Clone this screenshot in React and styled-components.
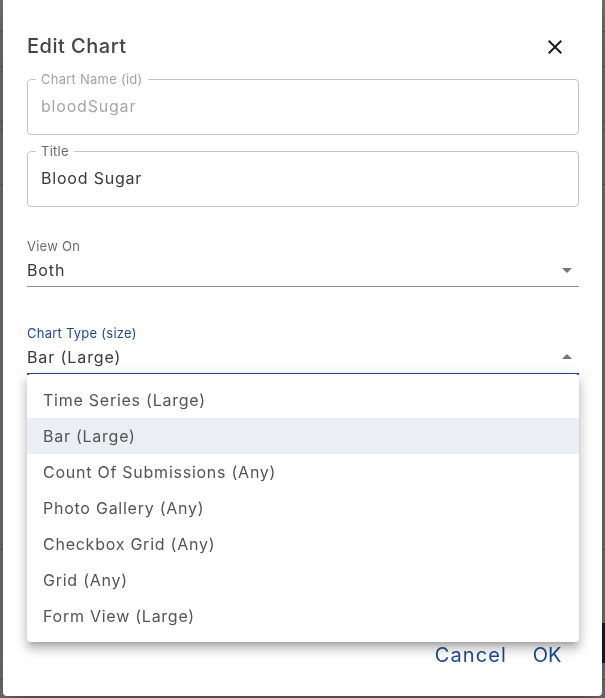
import React from "react";
import styled, { createGlobalStyle } from "styled-components";

const GlobalStyle = createGlobalStyle`
  html, body { margin: 0; padding: 0; }
  body {
    width: 605px;
    height: 698px;
    overflow: hidden;
    background: #ffffff;
    font-family: Inter, "Open Sans", sans-serif;
  }
  * { box-sizing: border-box; }
`;

/* ---------- page behind the modal ---------- */
const BgPage = styled.div`
  display: flex;
  flex-direction: column;
  height: 698px;
  overflow: hidden;
`;

const BgRow = styled.div`
  flex-shrink: 0;
  height: ${(p) => p.$h}px;
  border-bottom: ${(p) => (p.$plain ? "none" : "1px solid #cfcfcf")};
  display: flex;
  justify-content: flex-end;
`;

const BgButton = styled.div`
  width: 24px;
  height: 100%;
  background: #1e3f7a;
  border-radius: 4px 0 0 4px;
`;

/* ---------- modal ---------- */
const Overlay = styled.div`
  position: fixed;
  inset: 0;
  background: rgba(0, 0, 0, 0.56);
  display: flex;
  justify-content: center;
  align-items: flex-end;
  padding-bottom: 2px;
`;

const Dialog = styled.div`
  width: 599px;
  height: 700px;
  flex-shrink: 0;
  background: #fff;
  border-radius: 4px;
  box-shadow: 0 11px 15px -7px rgba(0, 0, 0, 0.2),
    0 24px 38px 3px rgba(0, 0, 0, 0.14), 0 9px 46px 8px rgba(0, 0, 0, 0.12);
  display: flex;
  flex-direction: column;
  padding: 34px 23px 0 24px;
`;

const Header = styled.div`
  display: flex;
  align-items: center;
  justify-content: space-between;
  height: 32px;
`;

const Title = styled.h2`
  margin: 0;
  font-size: 20px;
  line-height: 32px;
  font-weight: 500;
  color: #454545;
  letter-spacing: 0.5px;
`;

const CloseButton = styled.button`
  width: 24px;
  height: 24px;
  padding: 0;
  margin: 2px 12px 0 0;
  border: none;
  background: none;
  display: flex;
  color: #1c1c1c;
  cursor: pointer;
`;

const Fieldset = styled.fieldset`
  margin: ${(p) => p.$mt}px 0 0 0;
  padding: 0 13px;
  border: 1px solid #c4c4c4;
  border-radius: 4px;
  min-width: 0;
`;

const Legend = styled.legend`
  margin-left: -5px;
  padding: 0 5px;
  font-size: 13px;
  line-height: 16px;
  letter-spacing: 0.25px;
  color: ${(p) => (p.$disabled ? "#a3a3a3" : "#6b6b6b")};
`;

const OutlinedValue = styled.div`
  padding: 7px 0 16px;
  font-size: 16px;
  line-height: 24px;
  color: ${(p) => (p.$disabled ? "#a6a6a6" : "#3a3a3a")};
  letter-spacing: 0.8px;
`;

const SelectField = styled.div`
  position: relative;
  margin-top: ${(p) => p.$mt}px;
  display: flex;
  flex-direction: column;
`;

const SelectLabel = styled.label`
  font-size: 13px;
  line-height: 16px;
  color: ${(p) => (p.$focused ? "#1f4a91" : "#6b6b6b")};
  letter-spacing: 0.25px;
`;

const SelectInput = styled.div`
  display: flex;
  align-items: center;
  justify-content: space-between;
  padding: 4px 0;
  border-bottom: ${(p) => (p.$focused ? "2px solid #1f4a91" : "1px solid #8e8e8e")};
`;

const SelectValue = styled.span`
  font-size: 16px;
  line-height: 24px;
  color: #3a3a3a;
  letter-spacing: 0.9px;
`;

const ArrowIcon = styled.svg`
  width: 24px;
  height: 24px;
  fill: #757575;
  flex-shrink: 0;
`;

const Menu = styled.ul`
  position: absolute;
  left: 0;
  right: 0;
  top: calc(100% - 1px);
  margin: 0;
  padding: 8px 0;
  list-style: none;
  background: #fff;
  border-radius: 4px;
  z-index: 5;
  box-shadow: 0 5px 5px -3px rgba(0, 0, 0, 0.2),
    0 8px 10px 1px rgba(0, 0, 0, 0.14), 0 3px 14px 2px rgba(0, 0, 0, 0.12);
`;

const MenuItem = styled.li`
  height: 36px;
  display: flex;
  align-items: center;
  padding: 0 16px;
  font-size: 16px;
  color: #545454;
  letter-spacing: 0.75px;
  background: ${(p) => (p.$selected ? "#ebeef3" : "transparent")};
`;

const Actions = styled.div`
  margin-top: auto;
  display: flex;
  justify-content: flex-end;
  align-items: center;
  padding-bottom: 23px;
`;

const TextButton = styled.button`
  min-width: 64px;
  height: 36px;
  padding: 0 8px;
  border: none;
  background: none;
  font-family: inherit;
  font-size: 20px;
  letter-spacing: ${(p) => p.$ls || 0}px;
  color: #1f4a91;
  cursor: pointer;
`;

const CloseIcon = () => (
  <svg width="24" height="24" viewBox="0 0 24 24" fill="currentColor">
    <path d="M19 6.41 17.59 5 12 10.59 6.41 5 5 6.41 10.59 12 5 17.59 6.41 19 12 13.41 17.59 19 19 17.59 13.41 12z" />
  </svg>
);

const options = [
  "Time Series (Large)",
  "Bar (Large)",
  "Count Of Submissions (Any)",
  "Photo Gallery (Any)",
  "Checkbox Grid (Any)",
  "Grid (Any)",
  "Form View (Large)",
];

const bgRows = [
  { h: 32 },
  { h: 35 },
  { h: 55 },
  { h: 8 },
  { h: 55 },
  { h: 365 },
  { h: 73, plain: true },
  { h: 40, button: true, plain: true },
  { h: 17 },
];

export default function App() {
  return (
    <>
      <GlobalStyle />
      <BgPage>
        {bgRows.map((r, i) => (
          <BgRow key={i} $h={r.h} $plain={r.plain}>
            {r.button && <BgButton />}
          </BgRow>
        ))}
      </BgPage>
      <Overlay>
        <Dialog role="dialog">
          <Header>
            <Title>Edit Chart</Title>
            <CloseButton aria-label="close">
              <CloseIcon />
            </CloseButton>
          </Header>

          <Fieldset $mt={9} disabled>
            <Legend $disabled>Chart Name (id)</Legend>
            <OutlinedValue $disabled>bloodSugar</OutlinedValue>
          </Fieldset>

          <Fieldset $mt={8}>
            <Legend>Title</Legend>
            <OutlinedValue>Blood Sugar</OutlinedValue>
          </Fieldset>

          <SelectField $mt={31}>
            <SelectLabel>View On</SelectLabel>
            <SelectInput>
              <SelectValue>Both</SelectValue>
              <ArrowIcon viewBox="0 0 24 24">
                <path d="M7 10l5 5 5-5z" />
              </ArrowIcon>
            </SelectInput>
          </SelectField>

          <SelectField $mt={38}>
            <SelectLabel $focused>Chart Type (size)</SelectLabel>
            <SelectInput $focused>
              <SelectValue>Bar (Large)</SelectValue>
              <ArrowIcon viewBox="0 0 24 24">
                <path d="M7 14l5-5 5 5z" />
              </ArrowIcon>
            </SelectInput>
            <Menu role="listbox">
              {options.map((o) => (
                <MenuItem key={o} $selected={o === "Bar (Large)"}>
                  {o}
                </MenuItem>
              ))}
            </Menu>
          </SelectField>

          <Actions>
            <TextButton $ls={1.1}>Cancel</TextButton>
            <TextButton>OK</TextButton>
          </Actions>
        </Dialog>
      </Overlay>
    </>
  );
}
